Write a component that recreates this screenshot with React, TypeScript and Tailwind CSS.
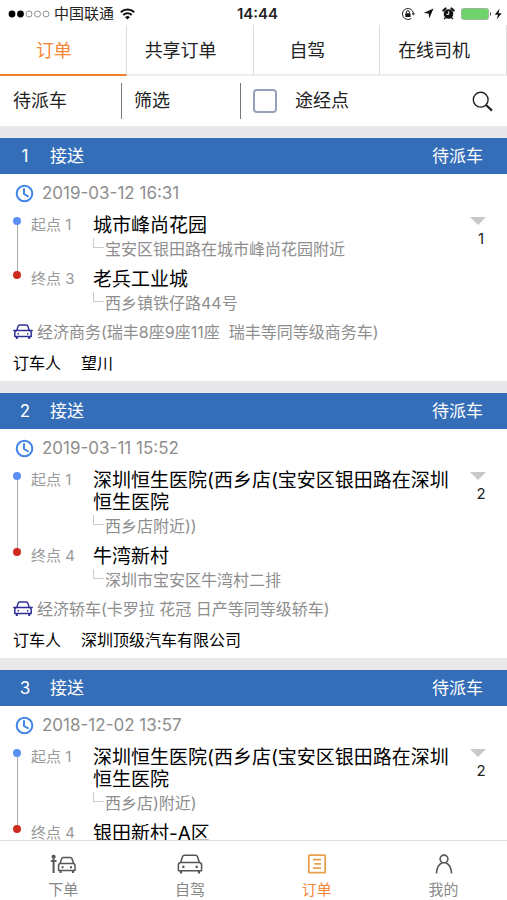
import { useState } from "react"

type Stop = {
  label: string
  place: string
  address?: string
}

type Order = {
  id: number
  type: string
  status: string
  time: string
  count: number
  stops: Stop[]
  car?: string
  booker?: string
}

const tabs = ["订单", "共享订单", "自驾", "在线司机"]

const orders: Order[] = [
  {
    id: 1,
    type: "接送",
    status: "待派车",
    time: "2019-03-12 16:31",
    count: 1,
    stops: [
      {
        label: "起点 1",
        place: "城市峰尚花园",
        address: "宝安区银田路在城市峰尚花园附近",
      },
      { label: "终点 3", place: "老兵工业城", address: "西乡镇铁仔路44号" },
    ],
    car: "经济商务(瑞丰8座9座11座  瑞丰等同等级商务车)",
    booker: "望川",
  },
  {
    id: 2,
    type: "接送",
    status: "待派车",
    time: "2019-03-11 15:52",
    count: 2,
    stops: [
      {
        label: "起点 1",
        place: "深圳恒生医院(西乡店(宝安区银田路在深圳恒生医院",
        address: "西乡店附近))",
      },
      {
        label: "终点 4",
        place: "牛湾新村",
        address: "深圳市宝安区牛湾村二排",
      },
    ],
    car: "经济轿车(卡罗拉 花冠 日产等同等级轿车)",
    booker: "深圳顶级汽车有限公司",
  },
  {
    id: 3,
    type: "接送",
    status: "待派车",
    time: "2018-12-02 13:57",
    count: 2,
    stops: [
      {
        label: "起点 1",
        place: "深圳恒生医院(西乡店(宝安区银田路在深圳恒生医院",
        address: "西乡店)附近)",
      },
      { label: "终点 4", place: "银田新村-A区" },
    ],
  },
]

function StatusBar() {
  return (
    <div className="grid h-[25px] shrink-0 grid-cols-[1fr_auto_1fr] items-center pt-[2px] pr-1 pl-2 text-[15px] leading-5">
      <div className="flex items-center">
        <svg width="42" height="8" viewBox="0 0 42 8" aria-hidden="true">
          <circle cx="4" cy="4" r="3.4" />
          <circle cx="12.5" cy="4" r="3.4" />
          <g fill="none" stroke="#777" strokeWidth="0.8">
            <circle cx="21" cy="4" r="3" />
            <circle cx="29.5" cy="4" r="3" />
            <circle cx="38" cy="4" r="3" />
          </g>
        </svg>
        <span className="ml-1">中国联通</span>
        <svg
          className="ml-[6px]"
          width="15"
          height="12"
          viewBox="0 0 15 12"
          fill="none"
          stroke="#111"
          strokeWidth="2"
          aria-hidden="true"
        >
          <path d="M0.8 4.2a9.6 9.6 0 0 1 13.4 0" />
          <path d="M3.3 7a6 6 0 0 1 8.4 0" />
          <path d="M7.5 11.6 5.1 9.2a3.4 3.4 0 0 1 4.8 0z" fill="#111" stroke="none" />
        </svg>
      </div>
      <span className="pl-1 font-semibold">14:44</span>
      <div className="flex items-center justify-end">
        {/* rotation lock */}
        <svg width="14" height="14" viewBox="0 0 14 14" aria-hidden="true">
          <path
            d="M10.2 11.4A5.5 5.5 0 1 1 12.4 6.2"
            fill="none"
            stroke="#222"
            strokeWidth="1"
          />
          <path d="M10.6 6.2h3.4l-1.7 2.4z" fill="#222" />
          <rect x="4.3" y="6.2" width="5.2" height="3.8" rx="0.5" fill="#111" />
          <path
            d="M5.4 6.4V5.2a1.5 1.5 0 0 1 3 0v1.2"
            fill="none"
            stroke="#111"
            strokeWidth="1"
          />
        </svg>
        <svg
          className="ml-2"
          width="11"
          height="11"
          viewBox="0 0 11 11"
          aria-hidden="true"
        >
          <path d="M10.5 0.6 6.2 10.4 5.7 5.5 0.6 5.1z" fill="#111" />
        </svg>
        <svg
          className="ml-2"
          width="13"
          height="13"
          viewBox="0 0 13 13"
          aria-hidden="true"
        >
          <circle cx="6.5" cy="7" r="4.8" fill="#111" />
          <path
            d="M1.2 3.6 3.6 1.4M11.8 3.6 9.4 1.4"
            stroke="#111"
            strokeWidth="2"
            strokeLinecap="round"
          />
          <path d="m3.4 10.6-1.2 1.6M9.6 10.6l1.2 1.6" stroke="#111" strokeWidth="1.4" />
          <path d="M6.7 4.2v3.1H4.4" fill="none" stroke="#fff" strokeWidth="1" />
        </svg>
        <svg
          className="ml-[6px]"
          width="42"
          height="14"
          viewBox="0 0 42 14"
          aria-hidden="true"
        >
          <rect x="0.5" y="1.5" width="27" height="11" rx="2" fill="#6fd46b" stroke="#9bb79a" />
          <path d="M29 5c1.4 0.5 1.4 3.5 0 4z" fill="#333" />
          <path d="M38.6 1.6 33.8 7.8h3.2l-1.3 4.8 5-6.4h-3.2z" fill="#111" />
        </svg>
      </div>
    </div>
  )
}

function CarIcon() {
  return (
    <svg
      className="mr-1"
      width="20"
      height="16"
      viewBox="0 0 20 16"
      fill="none"
      stroke="#2f2f95"
      strokeWidth="1.5"
      strokeLinejoin="round"
      aria-hidden="true"
    >
      <path d="M3.8 6.6 5 2.4C5.3 1.4 5.9 1 6.8 1h6.4c0.9 0 1.5 0.4 1.8 1.4l1.2 4.2" />
      <path d="M4 6.6h12c1.4 0 2.2 0.9 2.2 2.2v3.8H1.8V8.8c0-1.3 0.8-2.2 2.2-2.2z" />
      <path d="M0.8 6.4h2.4M16.8 6.4h2.4" strokeLinecap="round" />
      <path d="M3.8 12.8v2.2M16.2 12.8v2.2" strokeWidth="2" />
      <path d="M4.6 9.8H6M14 9.8h1.4" />
    </svg>
  )
}

function StopRow({ stop, last }: { stop: Stop; last: boolean }) {
  return (
    <li className={last ? "flex" : "flex pb-2"}>
      {/* dot and the line down to the next stop */}
      <div className={last ? "w-2" : "-mb-2 flex w-2 flex-col items-center"}>
        <div
          className={
            last
              ? "mt-[2px] size-2 rounded-full bg-[#cf2a1e]"
              : "mt-[2px] size-2 rounded-full bg-[#5b8ff5]"
          }
        />
        {!last && <div className="-mb-[3px] w-px flex-1 bg-[#aaa]" />}
      </div>
      <span className="ml-[10px] w-[62px] shrink-0 text-[15px] leading-5 text-[#999]">
        {stop.label}
      </span>
      <div className="min-w-0">
        <p className="text-[19px] leading-[22px] text-black">{stop.place}</p>
        {stop.address && (
          <p className="flex text-base leading-6 text-[#8e8e8e]">
            <span className="mt-px mr-px h-[10px] w-[11px] shrink-0 border-b border-l border-[#ccc]" />
            {stop.address}
          </p>
        )}
      </div>
    </li>
  )
}

function OrderCard({ order }: { order: Order }) {
  return (
    <article className="border-t-[12px] border-[#e8e7e9]">
      <header className="flex h-9 items-center bg-[#356eb8] pt-[2px] pr-6 text-[17px] text-white">
        <span className="w-[50px] text-center">{order.id}</span>
        <span>{order.type}</span>
        <span className="ml-auto">{order.status}</span>
      </header>
      <div className="px-[13px] pt-2 pb-[6px]">
        <p className="flex items-center pl-[2px] text-[17px] leading-[22px] text-[#8e8e8e]">
          <svg
            className="mr-2"
            width="19"
            height="19"
            viewBox="0 0 19 19"
            fill="none"
            stroke="#4285e8"
            strokeWidth="2"
            aria-hidden="true"
          >
            <circle cx="9.5" cy="9.5" r="7.8" />
            <path d="M9 5v5l3.8 2.2" strokeLinejoin="round" strokeLinecap="round" />
          </svg>
          {order.time}
        </p>
        <div className="mt-[11px] flex">
          <ul className="min-w-0 flex-1">
            {order.stops.map((stop, i) => (
              <StopRow
                key={stop.label}
                stop={stop}
                last={i === order.stops.length - 1}
              />
            ))}
          </ul>
          <button
            type="button"
            className="flex w-[44px] shrink-0 flex-col items-center self-start pt-[2px] pl-4 text-[15px] leading-5"
          >
            <svg
              className="mr-1"
              width="16"
              height="8"
              viewBox="0 0 16 8"
              aria-hidden="true"
            >
              <path d="M0 0h16L8 8z" fill="#c8c8c8" />
            </svg>
            <span className="mt-1 pl-[2px]">{order.count}</span>
          </button>
        </div>
        {order.car && (
          <p className="mt-[5px] flex items-center text-base leading-6 whitespace-pre text-[#8e8e8e]">
            <CarIcon />
            {order.car}
          </p>
        )}
        {order.booker && (
          <p className="mt-[7px] flex gap-5 text-base leading-6 text-black">
            <span>订车人</span>
            <span>{order.booker}</span>
          </p>
        )}
      </div>
    </article>
  )
}

function BottomNav() {
  const item =
    "flex flex-col items-center gap-1 pt-[13px] text-[15px] leading-6 text-[#888]"

  return (
    <nav className="grid h-[60px] shrink-0 grid-cols-4 border-t border-[#ddd] bg-white">
      <a href="#book" className={item}>
        <svg
          width="26"
          height="20"
          viewBox="0 0 26 20"
          fill="none"
          stroke="#555"
          strokeWidth="1.5"
          strokeLinejoin="round"
          aria-hidden="true"
        >
          <circle cx="3.6" cy="2.8" r="2.1" fill="#555" stroke="none" />
          <path d="M0.8 7h5.8" strokeWidth="1.8" />
          <path d="M3.6 5v14" strokeWidth="2" />
          <path d="M10 9.6 11.6 4.8c0.3-0.9 0.9-1.4 1.8-1.4h6.8c0.9 0 1.5 0.5 1.8 1.4l1.6 4.8" />
          <path d="M10.4 9.6h12.8c1.2 0 1.8 0.8 1.8 1.8v5.2H8.6v-5.2c0-1 0.6-1.8 1.8-1.8z" />
          <path d="M10.6 16.8v2.2M23 16.8v2.2" strokeWidth="2" />
          <path d="M11.6 13.2h2M20 13.2h2" strokeWidth="2" />
        </svg>
        下单
      </a>
      <a href="#self-drive" className={item}>
        <svg
          width="26"
          height="20"
          viewBox="0 0 26 20"
          fill="none"
          stroke="#555"
          strokeWidth="1.5"
          strokeLinejoin="round"
          aria-hidden="true"
        >
          <path d="M3.6 8.6 5.6 2.6C5.9 1.7 6.5 1.2 7.4 1.2h11.2c0.9 0 1.5 0.5 1.8 1.4l2 6" />
          <path d="M4 8.6h18c1.6 0 2.6 1 2.6 2.4v5.8H1.4V11c0-1.4 1-2.4 2.6-2.4z" />
          <path d="M4 17v2.4M22 17v2.4" strokeWidth="2.2" />
          <path d="M5.2 12.8h2.2M18.6 12.8h2.2" strokeWidth="2.2" />
        </svg>
        自驾
      </a>
      <a
        href="#orders"
        className="flex flex-col items-center gap-1 pt-[13px] text-[15px] leading-6 text-[#f58634]"
      >
        <svg
          width="20"
          height="20"
          viewBox="0 0 20 20"
          fill="none"
          stroke="#e6a04a"
          strokeWidth="1.8"
          strokeLinejoin="round"
          aria-hidden="true"
        >
          <rect x="1.8" y="1.2" width="16.4" height="17.4" rx="0.6" />
          <path d="M6 5.6h8M7.4 9.8h6.6M6 14.2h8" />
        </svg>
        订单
      </a>
      <a href="#me" className={item}>
        <svg
          width="20"
          height="20"
          viewBox="0 0 20 20"
          fill="none"
          stroke="#555"
          strokeWidth="1.6"
          aria-hidden="true"
        >
          <circle cx="10" cy="5" r="3.9" />
          <path d="M2.4 19.4c0.2-5.4 2.8-9.2 5.8-10.6M17.6 19.4c-0.2-5.4-2.8-9.2-5.8-10.6" />
        </svg>
        我的
      </a>
    </nav>
  )
}

export default function App() {
  const [activeTab, setActiveTab] = useState(tabs[0])
  const [viaPoint, setViaPoint] = useState(false)

  return (
    <div className="flex h-screen flex-col bg-white font-['Inter','Noto_Sans_CJK_SC',sans-serif] text-[#222]">
      <StatusBar />

      <div className="grid h-[51px] shrink-0 grid-cols-4 text-lg">
        {tabs.map((tab) => (
          <button
            key={tab}
            type="button"
            onClick={() => setActiveTab(tab)}
            className={
              tab === activeTab
                ? "border-r border-b-2 border-r-[#ddd] border-b-[#ee7f2d] pt-[2px] pr-[18px] text-[#f58634]"
                : "border-r border-b-2 border-r-[#ddd] border-b-[#eee] pt-[2px] pr-[18px]"
            }
          >
            {tab}
          </button>
        ))}
      </div>

      <div className="flex h-[50px] shrink-0 items-center text-lg">
        <button
          type="button"
          className="h-9 w-[122px] border-r border-[#777] pl-[13px] text-left"
        >
          待派车
        </button>
        <button
          type="button"
          className="h-9 w-[119px] border-r border-[#777] pl-3 text-left"
        >
          筛选
        </button>
        <label className="flex items-center gap-[18px] pl-3">
          <input
            type="checkbox"
            checked={viaPoint}
            onChange={(e) => setViaPoint(e.target.checked)}
            className="size-6 appearance-none rounded-sm border-2 border-[#97a0bd] checked:bg-[#97a0bd]"
          />
          途经点
        </label>
        <button type="button" aria-label="搜索" className="mr-[14px] ml-auto">
          <svg
            width="21"
            height="21"
            viewBox="0 0 21 21"
            fill="none"
            stroke="#222"
            aria-hidden="true"
          >
            <circle cx="8.7" cy="8.7" r="7.4" strokeWidth="1.4" />
            <path d="m14 14 6 5.6" strokeWidth="2.2" />
          </svg>
        </button>
      </div>

      <main className="min-h-0 flex-1 overflow-hidden">
        {orders.map((order) => (
          <OrderCard key={order.id} order={order} />
        ))}
      </main>

      <BottomNav />
    </div>
  )
}
